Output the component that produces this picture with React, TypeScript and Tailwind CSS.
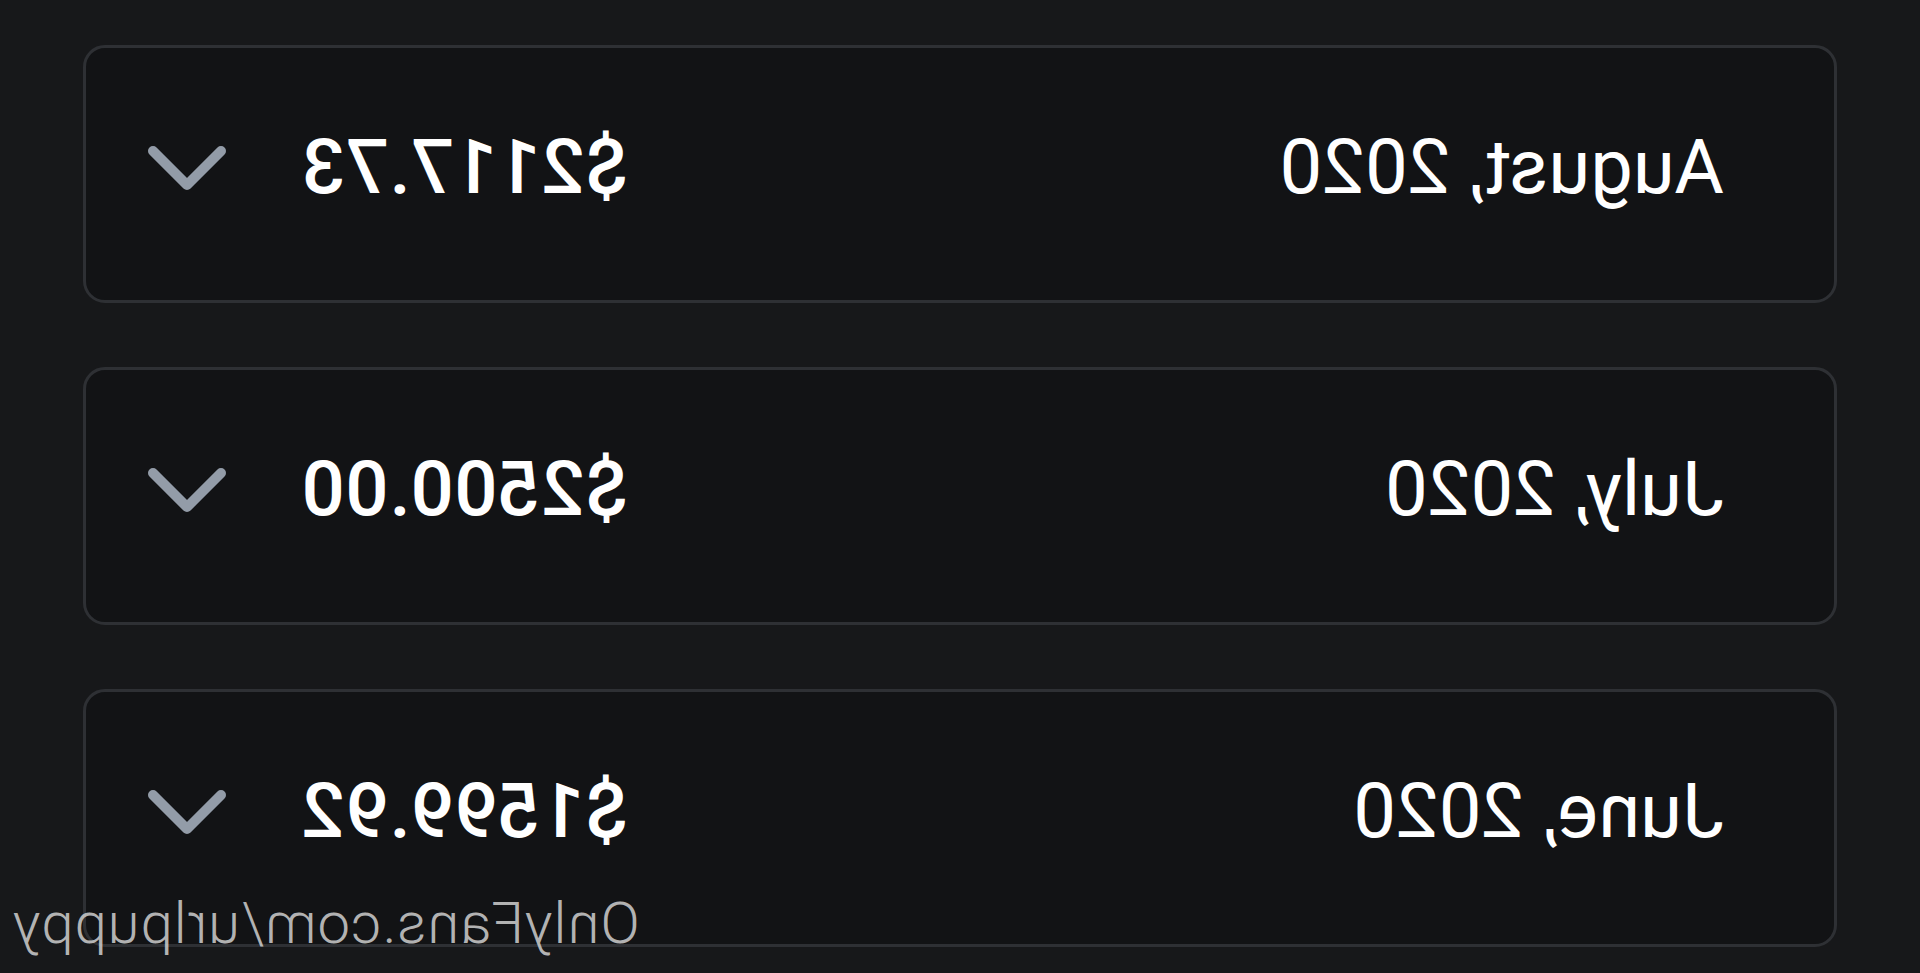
type Statement = {
  month: string;
  total: string;
};

const statements: Statement[] = [
  { month: "August, 2020", total: "$2117.73" },
  { month: "July, 2020", total: "$2500.00" },
  { month: "June, 2020", total: "$1599.92" },
];

function Chevron() {
  return (
    <svg width="80" height="48" viewBox="0 0 80 48" fill="none" className="shrink-0">
      <polyline
        points="6,6 40,40 74,6"
        stroke="#939ca8"
        strokeWidth="10"
        strokeLinecap="round"
        strokeLinejoin="round"
      />
    </svg>
  );
}

function StatementRow({ s }: { s: Statement }) {
  return (
    <div className="flex h-[258px] items-center rounded-[22px] border-[3px] border-[#2e3034] bg-[#121315] pb-[14px] pl-[110px] pr-[61px]">
      <span className="flex-1 text-[76px] font-normal leading-none text-white">{s.month}</span>
      <span className="text-[76px] font-medium leading-none tracking-[0.5px] text-white">{s.total}</span>
      <div className="ml-[74px] pt-[4px]">
        <Chevron />
      </div>
    </div>
  );
}

export default function App() {
  return (
    <div
      className="relative h-[973px] w-full overflow-hidden bg-[#17181a] -scale-x-100"
      style={{ fontFamily: "Roboto, 'Liberation Sans', sans-serif" }}
    >
      <div className="flex flex-col gap-[64px] px-[83px] pt-[45px]">
        {statements.map((s) => (
          <StatementRow key={s.month} s={s} />
        ))}
      </div>
      <span className="absolute right-[12px] top-[894px] text-[58px] font-light leading-none tracking-[1px] text-[#d0d0d0]/85">
        OnlyFans.com/urlpuppy
      </span>
    </div>
  );
}
